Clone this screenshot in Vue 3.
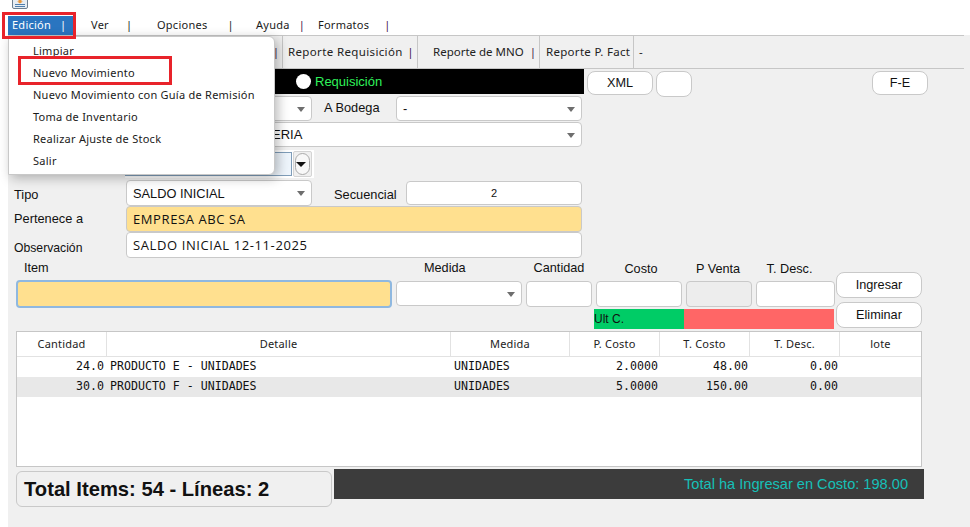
<script setup>
const menuBar = [
  { label: 'Edición', width: 66, active: true },
  { label: 'Ver', width: 66 },
  { label: 'Opciones', width: 99 },
  { label: 'Ayuda', width: 63 },
  { label: 'Formatos', width: 90 }
]
const menuItems = ['Limpiar', 'Nuevo Movimiento', 'Nuevo Movimiento con Guía de Remisión', 'Toma de Inventario', 'Realizar Ajuste de Stock', 'Salir']
const tabs = [
  { label: 'Reporte Requisición', width: 135 },
  { label: 'Reporte de MNO', width: 122 },
  { label: 'Reporte P. Fact', width: 94 }
]
const columns = [
  { label: 'Cantidad', width: 90 },
  { label: 'Detalle', width: 344 },
  { label: 'Medida', width: 119 },
  { label: 'P. Costo', width: 90 },
  { label: 'T. Costo', width: 90 },
  { label: 'T. Desc.', width: 90 },
  { label: 'lote', width: 81 }
]
const rows = [
  { qty: '24.0', det: 'PRODUCTO E - UNIDADES', med: 'UNIDADES', pc: '2.0000', tc: '48.00', td: '0.00' },
  { qty: '30.0', det: 'PRODUCTO F - UNIDADES', med: 'UNIDADES', pc: '5.0000', tc: '150.00', td: '0.00' }
]
</script>

<template>
  <div class="page">
    <header class="top">
      <div class="iconrow">
        <svg class="appicon" width="16" height="10" viewBox="0 0 16 10">
          <rect x="0.5" y="-5" width="15" height="13.5" rx="1.5" fill="#e6edf4" stroke="#6d7f90" />
          <path d="M3 6.5h10M3 4.5h10" stroke="#4f7fae" />
          <path d="M6.5 0h3v1.5h1.5L8 3.5 5 1.5h1.5z" fill="#e8963a" />
        </svg>
      </div>
      <nav class="menubar">
        <div v-for="m in menuBar" :key="m.label" class="mitem" :class="{ active: m.active }" :style="{ width: m.width + 'px' }">
          <span>{{ m.label }}</span><span class="bar">|</span>
        </div>
      </nav>
    </header>

    <main class="content">
      <div class="tabs">
        <div class="tab first"><span class="bar dark">|</span></div>
        <div v-for="t in tabs" :key="t.label" class="tab" :style="{ width: t.width + 'px' }">
          <span>{{ t.label }}</span><span v-if="t.label !== 'Reporte P. Fact'" class="bar">|</span>
        </div>
        <div class="tab dash">-</div>
      </div>

      <div class="typerow">
        <div class="blackbar">
          <span class="radio"></span><span class="req">Requisición</span>
        </div>
        <button class="btn xml">XML</button>
        <button class="btn blank"></button>
        <button class="btn fe">F-E</button>
      </div>

      <div class="row r-bodega">
        <div class="field sel w-186"><i class="caret"></i></div>
        <span class="lbl abod">A Bodega</span>
        <div class="field sel w-186"><span>-</span><i class="caret"></i></div>
      </div>
      <div class="row r-full">
        <div class="field sel w-456 right-text"><span class="hiddenpart">FERRETERIA</span><i class="caret"></i></div>
      </div>
      <div class="row r-date">
        <div class="dategroup">
          <div class="dateinput"></div>
          <div class="datebtn"><div class="datepill"><i class="caret dark"></i></div></div>
        </div>
      </div>
      <div class="row r-tipo">
        <span class="lbl side">Tipo</span>
        <div class="field sel w-186"><span>SALDO INICIAL</span><i class="caret"></i></div>
        <span class="lbl secu">Secuencial</span>
        <div class="field center seq">2</div>
      </div>
      <div class="row r-per">
        <span class="lbl side up">Pertenece a</span>
        <div class="field w-456 yellow hand">EMPRESA ABC SA</div>
      </div>
      <div class="row r-obs">
        <span class="lbl side down">Observación</span>
        <div class="field w-456 hand">SALDO INICIAL 12-11-2025</div>
      </div>

      <div class="entry">
        <div class="ecol c-item">
          <span class="elbl item-l">Item</span>
          <div class="einput item-i"></div>
        </div>
        <div class="ecol c-med">
          <span class="elbl med-l">Medida</span>
          <div class="einput med-i"><i class="caret"></i></div>
        </div>
        <div class="ecol c-can">
          <span class="elbl">Cantidad</span>
          <div class="einput can-i"></div>
        </div>
        <div class="pricegroup">
          <div class="prices">
            <div class="ecol c-cos"><span class="elbl low cos-l">Costo</span><div class="einput cos-i"></div></div>
            <div class="ecol c-ven"><span class="elbl low ven-l">P Venta</span><div class="einput ven-i"></div></div>
            <div class="ecol c-des"><span class="elbl low des-l">T. Desc.</span><div class="einput des-i"></div></div>
          </div>
          <div class="ultbar"><div class="ult">Ult C.</div><div class="ultred"></div></div>
        </div>
        <div class="actions">
          <button class="btn act">Ingresar</button>
          <button class="btn act">Eliminar</button>
        </div>
      </div>

      <section class="table">
        <div class="thead">
          <div v-for="c in columns" :key="c.label" class="th" :style="{ width: c.width + 'px' }">{{ c.label }}</div>
        </div>
        <div v-for="(r, i) in rows" :key="i" class="tr" :class="{ odd: i === 1 }">
          <div class="td num qty" style="width: 90px">{{ r.qty }}</div>
          <div class="td" style="width: 344px">{{ r.det }}</div>
          <div class="td" style="width: 119px">{{ r.med }}</div>
          <div class="td num" style="width: 90px">{{ r.pc }}</div>
          <div class="td num" style="width: 90px">{{ r.tc }}</div>
          <div class="td num" style="width: 90px">{{ r.td }}</div>
          <div class="td" style="width: 81px"></div>
        </div>
      </section>

      <footer class="totals">
        <div class="totleft">Total Items: 54 - Líneas: 2</div>
        <div class="totright">Total ha Ingresar en Costo: 198.00</div>
      </footer>
    </main>

    <div class="dropdown">
      <div v-for="it in menuItems" :key="it" class="ditem">{{ it }}</div>
    </div>
    <div class="redbox rb1"></div>
    <div class="redbox rb2"></div>
  </div>
</template>

<style>
html, body { margin: 0; padding: 0; background: #fff; }
</style>

<style scoped>
.page { position: relative; width: 970px; height: 527px; overflow: hidden; background: #fff; font-family: "Liberation Sans", Arial, sans-serif; color: #111; }
.top { height: 35px; }
.iconrow { height: 10px; padding-left: 12px; }
.appicon { display: block; }
.menubar { display: flex; height: 19px; margin-top: 6px; padding-left: 8px; font-family: "Noto Sans", sans-serif; font-size: 11px; line-height: 18px; letter-spacing: .25px; color: #1a1a1a; }
.mitem { display: flex; box-sizing: border-box; padding-left: 4px; }
.mitem .bar { margin-left: 9px; color: #222; }
.mitem:nth-child(2) { padding-left: 17px; }
.mitem:nth-child(3) { padding-left: 17px; }
.mitem:nth-child(3) .bar { margin-left: 20px; }
.mitem:nth-child(2) .bar { margin-left: 17px; }
.mitem:nth-child(4) { padding-left: 17px; }
.mitem:nth-child(5) { padding-left: 16px; }
.mitem:nth-child(4) .bar, .mitem:nth-child(5) .bar { color: #40104a; }
.mitem:nth-child(5) .bar { margin-left: 15px; }
.active { background: #2a75c0; color: #fff; }
.active .bar { color: #fff !important; }

.content { margin-left: 8px; height: 492px; background: #f0f0f0; }
.tabs { display: flex; width: 956px; height: 34px; box-sizing: border-box; border-top: 1px solid #c6c6c6; border-bottom: 1px solid #c6c6c6; font-family: "Noto Sans", sans-serif; font-size: 11.5px; line-height: 31px; color: #222; white-space: nowrap; }
.tab { box-sizing: border-box; padding-left: 5px; border-right: 1px solid #c6c6c6; display: flex; justify-content: space-between; padding-right: 3px; }
.tab.first { width: 275px; justify-content: flex-end; }
.tab:nth-child(2) { letter-spacing: .36px; }
.tab:nth-child(3) { padding-left: 15px; }
.tab:nth-child(4) { padding-left: 6px; letter-spacing: .3px; }
.tab.dash { border: 0; width: auto; }
.bar { color: #40104a; }

.typerow { display: flex; height: 27px; }
.blackbar { display: flex; align-items: center; width: 576px; height: 25px; background: #000; box-sizing: border-box; padding-left: 288px; }
.radio { width: 15px; height: 15px; border-radius: 50%; background: #fff; }
.req { margin-left: 4px; color: #2ff05a; font-size: 13px; }
.btn { box-sizing: border-box; background: #fff; border: 1px solid #c9c9c9; border-radius: 8px; font-family: "Liberation Sans", sans-serif; font-size: 12.7px; color: #111; padding: 0; }
.xml { width: 66px; height: 24px; margin: 2px 0 0 3px; }
.blank { width: 36px; height: 26px; margin: 2px 0 0 3px; }
.fe { width: 56px; height: 24px; margin: 2px 0 0 180px; }

.row { display: flex; align-items: center; padding-left: 118px; position: relative; }
.field { display: flex; align-items: center; box-sizing: border-box; position: relative; background: #fff; border: 1px solid #c9c9c9; border-radius: 4px; padding-left: 6px; font-size: 12.8px; height: 100%; }
.w-186 { width: 186px; }
.w-456 { width: 456px; }
.caret { position: absolute; right: 6px; top: 50%; margin-top: -2px; width: 0; height: 0; border-left: 4px solid transparent; border-right: 4px solid transparent; border-top: 5px solid #6e6e6e; }
.caret.dark { border-top-color: #111; right: 3px; border-left-width: 5px; border-right-width: 5px; }
.r-bodega { height: 26px; align-items: flex-start; }
.r-bodega .field { height: 25px; }
.abod { width: 84px; box-sizing: border-box; padding: 4px 0 0 12px; }
.lbl { font-size: 12.8px; }
.r-full { height: 25px; }
.right-text { padding-left: 93px; }
.hiddenpart { font-size: 13px; }
.r-date { height: 33px; padding-left: 117px; align-items: center; }
.dategroup { display: flex; align-items: center; width: 189px; height: 28px; background: #fff; box-sizing: border-box; }
.dateinput { width: 167px; height: 24px; box-sizing: border-box; border: 1px solid #7f9db9; background: #eef5fc; }
.datebtn { box-sizing: border-box; width: 19px; height: 26px; margin-left: 1px; padding: 1px; background: #f0f0f0; border: 1px solid #d4d4d4; border-radius: 2px; }
.datepill { position: relative; height: 100%; box-sizing: border-box; border: 1px solid #aaa; border-radius: 9px; background: #f8f8f8; }
.r-tipo { height: 26px; }
.side { position: absolute; left: 6px; top: 7px; font-size: 12.8px; }
.side.up { top: 5px; }
.side.down { top: 9px; font-size: 12.2px; }
.secu { width: 94px; box-sizing: border-box; padding-left: 22px; margin-top: 2px; }
.center { justify-content: center; padding: 0; font-size: 11px; }
.seq { width: 176px; height: 24px; }
.r-per { height: 26px; }
.r-obs { height: 26px; }
.yellow { background: #ffe08f; }
.hand { font-family: "Open Sans", sans-serif; font-size: 13px; letter-spacing: .6px; }

.entry { display: flex; height: 73px; padding-left: 8px; }
.ecol { display: flex; flex-direction: column; align-items: center; }
.elbl { height: 23px; line-height: 21px; font-size: 12.7px; white-space: nowrap; }
.elbl.low { line-height: 22px; }
.einput { box-sizing: border-box; position: relative; background: #fff; border: 1px solid #c9c9c9; border-radius: 4px; height: 26px; }
.c-item { width: 376px; align-items: flex-start; }
.item-l { height: 22px; padding-left: 8px; }
.item-i { width: 376px; height: 28px; background: #ffe08f; border: 2px solid #8fb8e0; border-radius: 4px; }
.c-med { width: 126px; margin-left: 4px; align-items: flex-start; }
.med-l { padding-left: 28px; }
.med-i { width: 126px; height: 25px; }
.c-can { width: 66px; margin-left: 4px; }
.can-i { width: 66px; height: 26px; }
.pricegroup { width: 240px; margin-left: 2px; }
.prices { display: flex; padding-left: 2px; gap: 4px; }
.c-cos { width: 86px; }
.c-ven { width: 66px; }
.c-des { width: 79px; }
.cos-l { padding-left: 4px; }
.ven-l { padding-right: 2px; }
.des-l { padding-right: 12px; }
.cos-i { width: 86px; height: 26px; }
.ven-i { width: 66px; background: #ededed; height: 26px; }
.des-i { width: 79px; height: 26px; }
.ultbar { display: flex; height: 20px; margin-top: 2px; font-size: 12px; line-height: 20px; width: 240px; }
.ult { width: 90px; background: #00cc66; }
.ultred { flex: 1; background: #ff6666; }
.actions { display: flex; flex-direction: column; gap: 4px; margin-top: 14px; margin-left: 2px; }
.act { width: 86px; height: 26px; }

.table { width: 906px; height: 136px; margin-left: 8px; box-sizing: border-box; background: #fff; border: 1px solid #c6c6c6; }
.thead { display: flex; height: 25px; box-sizing: border-box; border-bottom: 1px solid #e2e2e2; }
.th { box-sizing: border-box; border-right: 1px solid #e2e2e2; text-align: center; font-family: "Noto Sans", sans-serif; font-size: 11px; line-height: 24px; letter-spacing: .2px; color: #222; }
.th:last-child { border-right: 0; }
.tr { display: flex; height: 20px; }
.odd { background: #e8e8e8; }
.td { box-sizing: border-box; padding: 0 2px 0 3px; font-family: "DejaVu Sans Mono", monospace; font-size: 11.6px; line-height: 19px; white-space: pre; }
.num { text-align: right; }
.qty { padding-right: 3px; }

.totals { display: flex; margin-top: 2px; padding-left: 8px; align-items: flex-start; }
.totleft { box-sizing: border-box; width: 316px; height: 36px; margin-top: 2px; border: 1px solid #c9c9c9; border-radius: 6px; padding-left: 7px; background: #f0f0f0; font-weight: bold; font-size: 20.2px; line-height: 35px; }
.totright { box-sizing: border-box; width: 590px; height: 30px; margin-left: 2px; background: #3c3c3c; color: #16c0b8; text-align: right; padding-right: 16px; font-size: 14.6px; line-height: 30px; }

.dropdown { position: absolute; left: 8px; top: 36px; width: 267px; height: 139px; box-sizing: border-box; padding-top: 3px; background: #fff; border: 1px solid #c8c8c8; border-radius: 0 6px 6px 0; box-shadow: 3px 3px 12px rgba(0,0,0,.28); font-family: "Noto Sans", sans-serif; font-size: 11px; letter-spacing: .25px; color: #1a1a1a; }
.ditem { height: 22px; line-height: 22px; padding-left: 24px; }
.redbox { position: absolute; box-sizing: border-box; border: 3px solid #e8232a; pointer-events: none; }
.rb1 { left: 2px; top: 12px; width: 74px; height: 27px; }
.rb2 { left: 18px; top: 56px; width: 154px; height: 29px; }
</style>
